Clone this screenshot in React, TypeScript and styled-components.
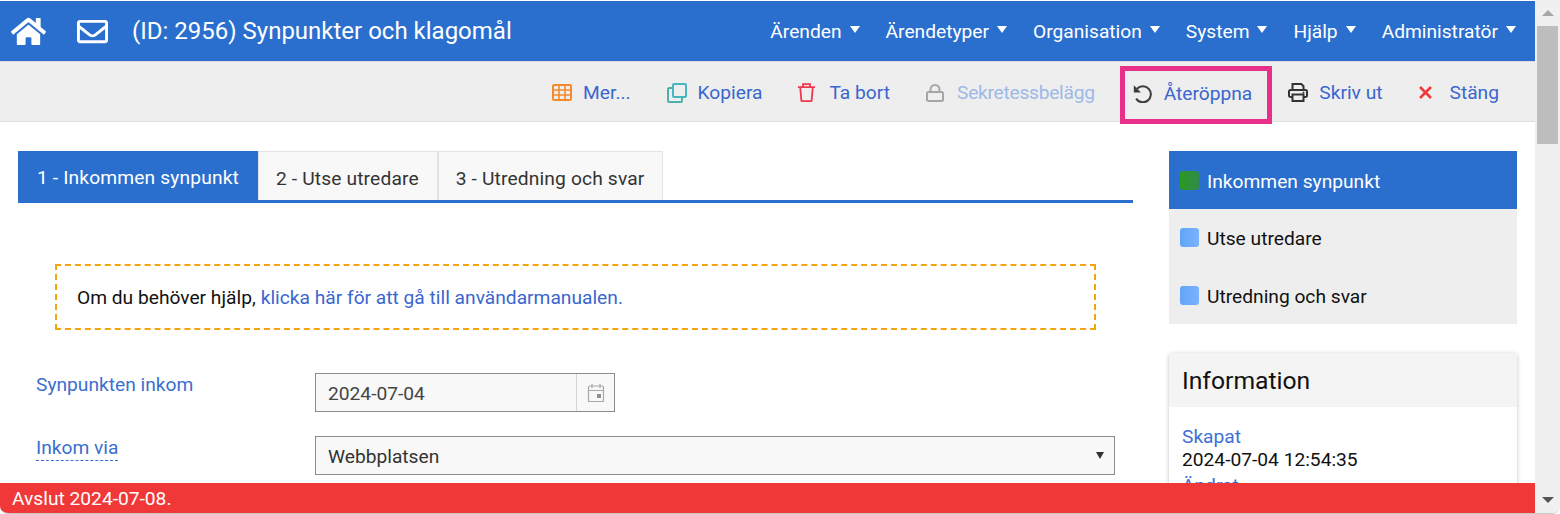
import styled, { createGlobalStyle } from 'styled-components';
import { FaHome, FaRegEnvelope } from 'react-icons/fa';
import type { ReactNode } from 'react';

const GlobalStyle = createGlobalStyle`
  html, body {
    margin: 0;
    padding: 0;
    height: 514px;
    overflow: hidden;
    background: #fff;
    font-family: Roboto, "Liberation Sans", sans-serif;
  }
  * { box-sizing: border-box; }
`;

const menus = ['Ärenden', 'Ärendetyper', 'Organisation', 'System', 'Hjälp', 'Administratör'];

const steps = [
  { label: 'Inkommen synpunkt', active: true },
  { label: 'Utse utredare', active: false },
  { label: 'Utredning och svar', active: false },
];

const TableIcon = () => (
  <svg width="20" height="17" viewBox="0 0 20 17" fill="none" stroke="#f58a2c" strokeWidth="1.6">
    <rect x="1" y="1" width="18" height="15" rx="1" strokeWidth="2" />
    <path d="M7 1v15M13 1v15M1 6h18M1 11h18" />
  </svg>
);

const CopyIcon = () => (
  <svg width="20" height="20" viewBox="0 0 20 20" fill="none" strokeWidth="2">
    <rect x="6" y="1" width="13" height="13" rx="1" stroke="#45b8bd" />
    <path d="M6 5H2a1 1 0 0 0-1 1v12a1 1 0 0 0 1 1h12a1 1 0 0 0 1-1v-4" stroke="#4fb0ad" />
  </svg>
);

const TrashIcon = () => (
  <svg width="17" height="19" viewBox="0 0 17 19" fill="none" stroke="#f0384f" strokeWidth="1.8">
    <path d="M0 4.2h17M5 4V1.2h7V4M2.2 4.2l1.2 13.6c0 .2.2.3.4.3h9.4c.2 0 .4-.1.4-.3l1.2-13.6" />
  </svg>
);

const LockIcon = () => (
  <svg width="18" height="18" viewBox="0 0 18 18" fill="none" stroke="#a6a6a6" strokeWidth="2">
    <rect x="1" y="8" width="16" height="9" rx="1.5" />
    <path d="M4.5 8V5.5a4.5 4.5 0 0 1 9 0V8" />
  </svg>
);

const UndoIcon = () => (
  <svg width="19" height="19" viewBox="0 0 19 19" fill="none">
    <path d="M4 4.8a8 8 0 1 1-.9 9.8" stroke="#3d3d3d" strokeWidth="2.1" />
    <path d="M.8 1.2v7.2H8z" fill="#3d3d3d" />
  </svg>
);

const PrintIcon = () => (
  <svg width="20" height="19" viewBox="0 0 20 19" fill="none" stroke="#333" strokeWidth="2">
    <path d="M4.5 7V1h8.8L15.5 3.2V7" />
    <path d="M4.5 14H2.5A1.5 1.5 0 0 1 1 12.5V8.5A1.5 1.5 0 0 1 2.5 7h15A1.5 1.5 0 0 1 19 8.5v4a1.5 1.5 0 0 1-1.5 1.5h-2" />
    <rect x="4.5" y="11.5" width="11" height="6.5" />
    <circle cx="15.5" cy="9.7" r=".6" fill="#333" strokeWidth="1" />
  </svg>
);

const CloseIcon = () => (
  <svg width="13" height="13" viewBox="0 0 13 13" fill="none" stroke="#f03a3a" strokeWidth="2.6">
    <path d="M1 1l11 11M12 1L1 12" />
  </svg>
);

function App() {
  const tools: { label: string; icon: ReactNode; disabled?: boolean; marked?: boolean }[] = [
    { label: 'Mer...', icon: <TableIcon /> },
    { label: 'Kopiera', icon: <CopyIcon /> },
    { label: 'Ta bort', icon: <TrashIcon /> },
    { label: 'Sekretessbelägg', icon: <LockIcon />, disabled: true },
    { label: 'Återöppna', icon: <UndoIcon />, marked: true },
    { label: 'Skriv ut', icon: <PrintIcon /> },
    { label: 'Stäng', icon: <CloseIcon /> },
  ];

  return (
    <>
      <GlobalStyle />
      <Window>
        <Main>
          <Header>
            <HomeIcon><FaHome /></HomeIcon>
            <MailIcon><FaRegEnvelope /></MailIcon>
            <Title>(ID: 2956) Synpunkter och klagomål</Title>
            <Menu>
              {menus.map((m) => (
                <MenuItem key={m}>
                  {m}
                  <Caret />
                </MenuItem>
              ))}
            </Menu>
          </Header>
          <Toolbar>
            {tools.map((t) => (
              <Tool key={t.label} $disabled={t.disabled} $marked={t.marked}>
                <ToolIcon>{t.icon}</ToolIcon>
                {t.label}
              </Tool>
            ))}
          </Toolbar>
          <Content>
            <Left>
              <Tabs>
                <Tab $active>1 - Inkommen synpunkt</Tab>
                <Tab>2 - Utse utredare</Tab>
                <Tab>3 - Utredning och svar</Tab>
              </Tabs>
              <Help>
                Om du behöver hjälp, <HelpLink>klicka här för att gå till användarmanualen.</HelpLink>
              </Help>
              <FormRow>
                <FieldLabel><FieldText>Synpunkten inkom</FieldText></FieldLabel>
                <DateField>
                  <DateValue>2024-07-04</DateValue>
                  <DateButton>
                    <svg width="18" height="20" viewBox="0 0 18 20" fill="none" stroke="#a8a8a8" strokeWidth="1.2">
                      <rect x="1.5" y="3" width="15" height="15.5" rx="1" />
                      <path d="M1.5 7.5h15M5 1v4M13 1v4" />
                      <rect x="10" y="11" width="4" height="4" fill="#8f8f8f" stroke="none" />
                    </svg>
                  </DateButton>
                </DateField>
              </FormRow>
              <FormRow>
                <FieldLabel><FieldText $dashed>Inkom via</FieldText></FieldLabel>
                <SelectField>
                  Webbplatsen
                  <SelectArrow />
                </SelectField>
              </FormRow>
            </Left>
            <Side>
              <Steps>
                {steps.map((s) => (
                  <Step key={s.label} $active={s.active}>
                    <StepDot $active={s.active} />
                    <StepText>{s.label}</StepText>
                  </Step>
                ))}
              </Steps>
              <InfoCard>
                <InfoHead>Information</InfoHead>
                <InfoBody>
                  <InfoKey>Skapat</InfoKey>
                  <InfoValue>2024-07-04 12:54:35</InfoValue>
                  <InfoKey>Ändrat</InfoKey>
                </InfoBody>
              </InfoCard>
            </Side>
          </Content>
          <Notice>Avslut 2024-07-08.</Notice>
        </Main>
        <Scrollbar>
          <ScrollArrow $up />
          <ScrollTrack><ScrollThumb /></ScrollTrack>
          <ScrollArrow />
        </Scrollbar>
      </Window>
    </>
  );
}

const Window = styled.div`
  display: flex;
  width: 1560px;
  height: 514px;
  overflow: hidden;
  border-bottom: 1px solid #c8c8c8;
  border-radius: 0 0 8px 8px;
`;
const Main = styled.div`
  position: relative;
  flex: 1;
  min-width: 0;
  height: 514px;
  padding-top: 1px;
  overflow: hidden;
`;
const Header = styled.header`
  display: flex;
  align-items: center;
  height: 60px;
  padding-left: 11px;
  background: #2a6fce;
  color: #fff;
`;
const HomeIcon = styled.span`
  display: flex;
  width: 66px;
  font-size: 35px;
`;
const MailIcon = styled.span`
  display: flex;
  width: 55px;
  font-size: 31px;
`;
const Title = styled.div`
  font-size: 24px;
`;
const Menu = styled.nav`
  display: flex;
  gap: 26px;
  margin-left: auto;
  padding: 1px 19px 0 0;
`;
const MenuItem = styled.div`
  display: flex;
  align-items: center;
  font-size: 19.2px;
`;
const Caret = styled.span`
  margin: -4px 0 0 8px;
  border-left: 5px solid transparent;
  border-right: 5px solid transparent;
  border-top: 7px solid #fff;
`;
const Toolbar = styled.div`
  display: flex;
  justify-content: flex-end;
  align-items: center;
  gap: 36px;
  height: 61px;
  padding: 2px 36px 0 0;
  background: #eee;
  border-top: 1px solid #ddd;
  border-bottom: 1px solid #ddd;
`;
const Tool = styled.div<{ $disabled?: boolean; $marked?: boolean }>`
  display: flex;
  align-items: center;
  font-size: 19.2px;
  color: ${(p) => (p.$disabled ? '#9db9e6' : '#3a66cf')};
  letter-spacing: ${(p) => (p.$disabled ? '-0.27px' : '0')};
  ${(p) =>
    p.$marked &&
    `
    align-self: flex-start;
    height: 58px;
    margin: 2px -20px 0 -11px;
    padding: 0 15px 4px 8px;
    border: 5px solid #e8308a;
  `}
`;
const ToolIcon = styled.span`
  display: flex;
  align-items: center;
  width: 20px;
  margin-right: 11px;
`;
const Content = styled.div`
  display: flex;
  padding: 29px 18px 0;
`;
const Left = styled.div`
  width: 1115px;
`;
const Tabs = styled.div`
  display: flex;
  height: 52px;
  border-bottom: 3px solid #2a6fce;
`;
const Tab = styled.div<{ $active?: boolean }>`
  display: flex;
  align-items: center;
  padding: 4px ${(p) => (p.$active ? '19px' : '18px')} 0 ${(p) => (p.$active ? '19px' : '17px')};
  font-size: 19.2px;
  letter-spacing: 0.15px;
  color: ${(p) => (p.$active ? '#fff' : '#333')};
  background: ${(p) => (p.$active ? '#2a6fce' : '#f8f8f8')};
  border: ${(p) => (p.$active ? '0' : '1px solid #e2e2e2')};
  border-bottom: 0;
`;
const Help = styled.div`
  display: flex;
  align-items: center;
  gap: 5px;
  width: 1041px;
  height: 66px;
  margin: 61px 0 43px 37px;
  padding-left: 20px;
  font-size: 19.2px;
  color: #111;
  border: 2px dashed #f5a40f;
`;
const HelpLink = styled.span`
  color: #3a66cf;
`;
const FormRow = styled.div`
  display: flex;
  align-items: flex-start;
  margin-bottom: 24px;
  padding-left: 18px;
`;
const FieldLabel = styled.div`
  width: 279px;
  font-size: 19.2px;
  line-height: 23px;
  color: #3a6fd0;
`;
const FieldText = styled.span<{ $dashed?: boolean }>`
  display: inline-block;
  padding-bottom: 1px;
  border-bottom: ${(p) => (p.$dashed ? '1px dashed #3a6fd0' : '0')};
`;
const DateField = styled.div`
  display: flex;
  align-items: center;
  width: 300px;
  height: 39px;
  background: #f8f8f8;
  border: 1px solid #8c8c8c;
`;
const DateValue = styled.div`
  flex: 1;
  padding: 2px 0 0 12px;
  font-size: 19.2px;
  color: #444;
`;
const DateButton = styled.div`
  display: flex;
  align-items: center;
  justify-content: center;
  width: 38px;
  height: 100%;
  border-left: 1px solid #d5d5d5;
`;
const SelectField = styled.div`
  position: relative;
  display: flex;
  align-items: center;
  width: 800px;
  height: 39px;
  padding: 2px 0 0 12px;
  font-size: 19.2px;
  color: #333;
  background: #f8f8f8;
  border: 1px solid #8c8c8c;
`;
const SelectArrow = styled.span`
  position: absolute;
  right: 10px;
  top: 15px;
  border-left: 4.5px solid transparent;
  border-right: 4.5px solid transparent;
  border-top: 7px solid #333;
`;
const Side = styled.aside`
  width: 348px;
  margin-left: 36px;
`;
const Steps = styled.div`
  background: #eee;
`;
const Step = styled.div<{ $active?: boolean }>`
  display: flex;
  align-items: center;
  gap: 8px;
  height: ${(p) => (p.$active ? '58px' : '57.5px')};
  padding-left: 11px;
  font-size: 19.2px;
  color: ${(p) => (p.$active ? '#fff' : '#111')};
  background: ${(p) => (p.$active ? '#2a6fce' : 'transparent')};
`;
const StepText = styled.span`
  padding-top: 2px;
`;
const StepDot = styled.span<{ $active?: boolean }>`
  width: 19px;
  height: 19px;
  border-radius: 3px;
  background: ${(p) =>
    p.$active ? 'linear-gradient(90deg, #2b9a20, #2f8a4c)' : 'linear-gradient(90deg, #62a4f7, #7ab2ff)'};
`;
const InfoCard = styled.div`
  margin-top: 29px;
  background: #fff;
  border-radius: 3px;
  box-shadow: 0 1px 4px rgba(0, 0, 0, 0.25);
`;
const InfoHead = styled.div`
  display: flex;
  align-items: center;
  height: 54px;
  padding-left: 13px;
  font-size: 24.7px;
  color: #111;
  background: #f4f4f4;
`;
const InfoBody = styled.div`
  padding: 18px 13px;
`;
const InfoKey = styled.div`
  font-size: 19.2px;
  line-height: 23px;
  color: #3f6fd6;
`;
const InfoValue = styled.div`
  font-size: 19.2px;
  line-height: 23px;
  margin-bottom: 3px;
  color: #111;
`;
const Notice = styled.div`
  position: absolute;
  left: 0;
  right: 0;
  top: 483px;
  display: flex;
  align-items: center;
  height: 30px;
  padding-left: 12px;
  font-size: 19.2px;
  color: #fff;
  background: #f03838;
`;
const Scrollbar = styled.div`
  display: flex;
  flex-direction: column;
  width: 25px;
  background: #f0f0f0;
`;
const ScrollArrow = styled.div<{ $up?: boolean }>`
  display: flex;
  justify-content: center;
  align-items: center;
  height: 26px;
  &::before {
    content: '';
    border-left: 6px solid transparent;
    border-right: 6px solid transparent;
    border-${(p) => (p.$up ? 'bottom' : 'top')}: 6px solid ${(p) => (p.$up ? '#a6a6a6' : '#555')};
  }
`;
const ScrollTrack = styled.div`
  flex: 1;
  padding: 0 2px;
`;
const ScrollThumb = styled.div`
  height: 118px;
  background: #bdbdbd;
`;

export default App;
